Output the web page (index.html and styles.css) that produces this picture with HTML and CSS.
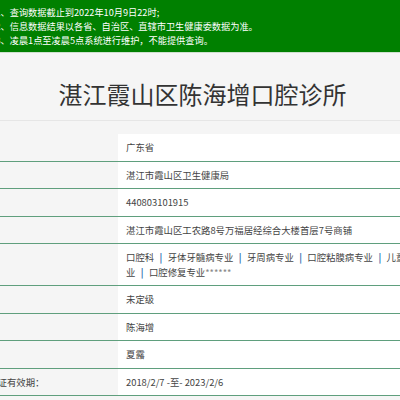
FILE: index.html
```html
<!DOCTYPE html>
<html lang="zh-CN">
<head>
<meta charset="utf-8">
<title>湛江霞山区陈海增口腔诊所</title>
<link rel="stylesheet" href="styles.css">
</head>
<body>
<div class="notice">
  <ol class="notice-list">
    <li>1、查询数据截止到2022年10月9日22时;</li>
    <li>2、信息数据结果以各省、自治区、直辖市卫生健康委数据为准。</li>
    <li>3、凌晨1点至凌晨5点系统进行维护，不能提供查询。</li>
  </ol>
</div>
<div class="header">
  <h1 class="title">湛江霞山区陈海增口腔诊所</h1>
</div>
<div class="content">
  <table class="info">
    <colgroup><col class="col-label"><col class="col-value"></colgroup>
    <tbody>
      <tr><th>省份：</th><td>广东省</td></tr>
      <tr><th>机关：</th><td>湛江市霞山区卫生健康局</td></tr>
      <tr><th>登记号：</th><td>440803101915</td></tr>
      <tr><th>地址：</th><td>湛江市霞山区工农路8号万福居经综合大楼首层7号商铺</td></tr>
      <tr><th>科目：</th><td>口腔科<span class="sep">|</span>牙体牙髓病专业<span class="sep">|</span>牙周病专业<span class="sep">|</span>口腔粘膜病专业<span class="sep">|</span>儿童口腔专业<span class="sep">|</span>口腔修复专业<span class="mask">******</span></td></tr>
      <tr><th>级别：</th><td>未定级</td></tr>
      <tr><th>法人：</th><td>陈海增</td></tr>
      <tr><th>负责人：</th><td>夏露</td></tr>
      <tr><th>执业许可证有效期：</th><td>2018/2/7 -至- 2023/2/6</td></tr>
    </tbody>
  </table>
</div>
</body>
</html>
```
FILE: styles.css
```css
html, body {
  margin: 0;
  padding: 0;
  overflow: hidden;
}
body {
  background: #f5f5f5;
  font-family: "Noto Sans CJK SC", "Microsoft YaHei", sans-serif;
  color: #444;
}
.notice {
  background: #008000;
  color: #fff;
  padding: 5px 0 5px 0;
  border-bottom: 1px solid #cfe0cf;
}
.notice-list {
  list-style: none;
  margin: 0 0 0 -4.6px;
  padding: 0;
  font-size: 9.2px;
  line-height: 14px;
}
.header {
  padding: 26px 0 11px 5px;
  border-bottom: 1px solid #e6e6e6;
  text-align: center;
}
.title {
  margin: 0;
  font-size: 24px;
  line-height: 30px;
  font-weight: normal;
  color: #333;
}
.content {
  padding-top: 13px;
}
.info {
  margin-left: -48px;
  width: 496px;
  table-layout: fixed;
  border-collapse: collapse;
  font-size: 9.4px;
  line-height: 14.5px;
}
.col-label { width: 166px; }
.col-value { width: 330px; }
.info tr {
  border-bottom: 1px solid #5f9f7d;
}
.info th {
  background: #f5f5f5;
  font-weight: normal;
  text-align: left;
  white-space: nowrap;
  padding: 6px 8px;
  color: #444;
  vertical-align: middle;
}
.info td {
  background: #fff;
  padding: 6px 8px;
  color: #444;
  vertical-align: middle;
}
.sep {
  color: #2f6fb0;
  font-weight: bold;
  margin: 0 5.4px;
}
.mask {
  color: #888;
}
```
